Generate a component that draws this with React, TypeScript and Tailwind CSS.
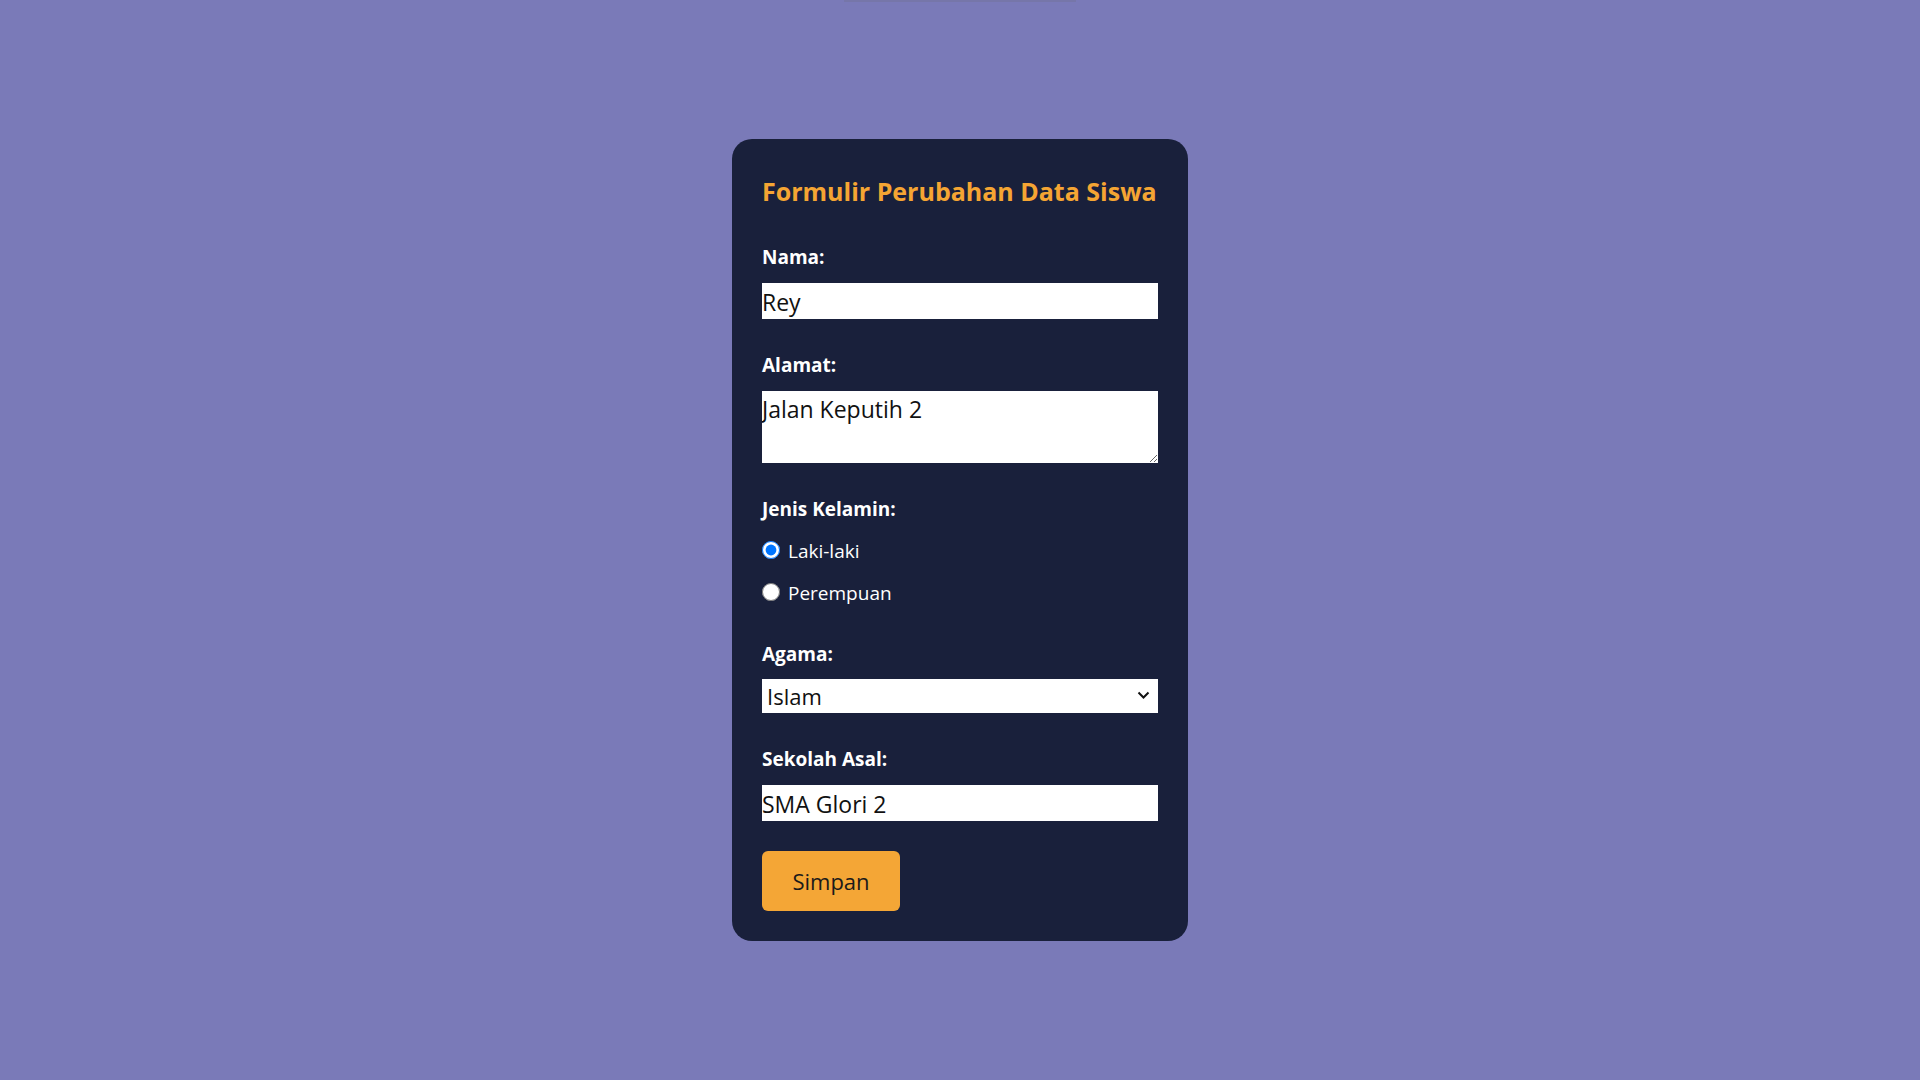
import React, { useState } from 'react';

// Shared field styles
const LABEL_CLASS = "block text-white font-bold text-[19px] leading-[24px]";
const INPUT_CLASS = "block w-full h-[36px] bg-white text-[#111] text-[23px] leading-[30px] pt-[2px] outline-none border-0";

const AGAMA_OPTIONS = ['Islam', 'Kristen', 'Katolik', 'Hindu', 'Buddha', 'Konghucu'];

export default function App() {
  const [nama, setNama] = useState('Rey');
  const [alamat, setAlamat] = useState('Jalan Keputih 2');
  const [gender, setGender] = useState('laki');
  const [agama, setAgama] = useState('Islam');
  const [sekolah, setSekolah] = useState('SMA Glori 2');

  return (
    <div
      className="min-h-screen w-full bg-[#7a7ab8] flex flex-col items-center"
      style={{ fontFamily: '"Open Sans", "Noto Sans", sans-serif' }}
    >
      {/* faint shadow of header above the fold */}
      <div className="h-[2px] w-[232px] bg-[#73739f] opacity-60" />

      <form
        className="mt-[137px] w-[456px] rounded-[20px] bg-[#19203b] p-[30px] flex flex-col"
        onSubmit={(e) => e.preventDefault()}
      >
        <h2 className="mt-[6px] text-[#f5a533] font-bold text-[25px] leading-[32px] whitespace-nowrap">
          Formulir Perubahan Data Siswa
        </h2>

        {/* Nama */}
        <label className={`${LABEL_CLASS} mt-[38px]`}>Nama:</label>
        <input
          type="text"
          className={`${INPUT_CLASS} mt-[14px]`}
          value={nama}
          onChange={(e) => setNama(e.target.value)}
        />

        {/* Alamat */}
        <label className={`${LABEL_CLASS} mt-[34px]`}>Alamat:</label>
        <textarea
          className="block w-full h-[72px] mt-[14px] bg-white text-[#111] text-[23px] leading-[30px] pt-[3px] outline-none border-0 resize-y"
          value={alamat}
          onChange={(e) => setAlamat(e.target.value)}
        />

        {/* Jenis Kelamin */}
        <label className={`${LABEL_CLASS} mt-[34px]`}>Jenis Kelamin:</label>
        <div className="mt-[9px] flex flex-col">
          <label className="flex items-center gap-[8px] h-[42px] text-white text-[19px]">
            <input
              type="radio"
              name="gender"
              className="w-[18px] h-[18px] m-0 -mt-[3px]"
              checked={gender === 'laki'}
              onChange={() => setGender('laki')}
            />
            Laki-laki
          </label>
          <label className="flex items-center gap-[8px] h-[42px] text-white text-[19px]">
            <input
              type="radio"
              name="gender"
              className="w-[18px] h-[18px] m-0 -mt-[3px]"
              checked={gender === 'perempuan'}
              onChange={() => setGender('perempuan')}
            />
            Perempuan
          </label>
        </div>

        {/* Agama */}
        <label className={`${LABEL_CLASS} mt-[28px]`}>Agama:</label>
        <div className="relative mt-[13px]">
          <select
            className="block w-full h-[34px] appearance-none bg-white text-[#111] text-[22px] leading-[30px] pl-[5px] outline-none border-0"
            value={agama}
            onChange={(e) => setAgama(e.target.value)}
          >
            {AGAMA_OPTIONS.map((a) => (
              <option key={a} value={a}>{a}</option>
            ))}
          </select>
          <svg
            className="absolute right-[8px] top-[12px] pointer-events-none"
            width="13"
            height="9"
            viewBox="0 0 13 9"
            fill="none"
          >
            <path d="M1.5 1.5 L6.5 6.5 L11.5 1.5" stroke="#111" strokeWidth="2" />
          </svg>
        </div>

        {/* Sekolah Asal */}
        <label className={`${LABEL_CLASS} mt-[34px]`}>Sekolah Asal:</label>
        <input
          type="text"
          className={`${INPUT_CLASS} mt-[14px]`}
          value={sekolah}
          onChange={(e) => setSekolah(e.target.value)}
        />

        <button
          type="submit"
          className="mt-[30px] w-[138px] h-[60px] rounded-[6px] bg-[#f4a636] text-[#1a1a1a] text-[22px]"
        >
          Simpan
        </button>
      </form>
    </div>
  );
}
